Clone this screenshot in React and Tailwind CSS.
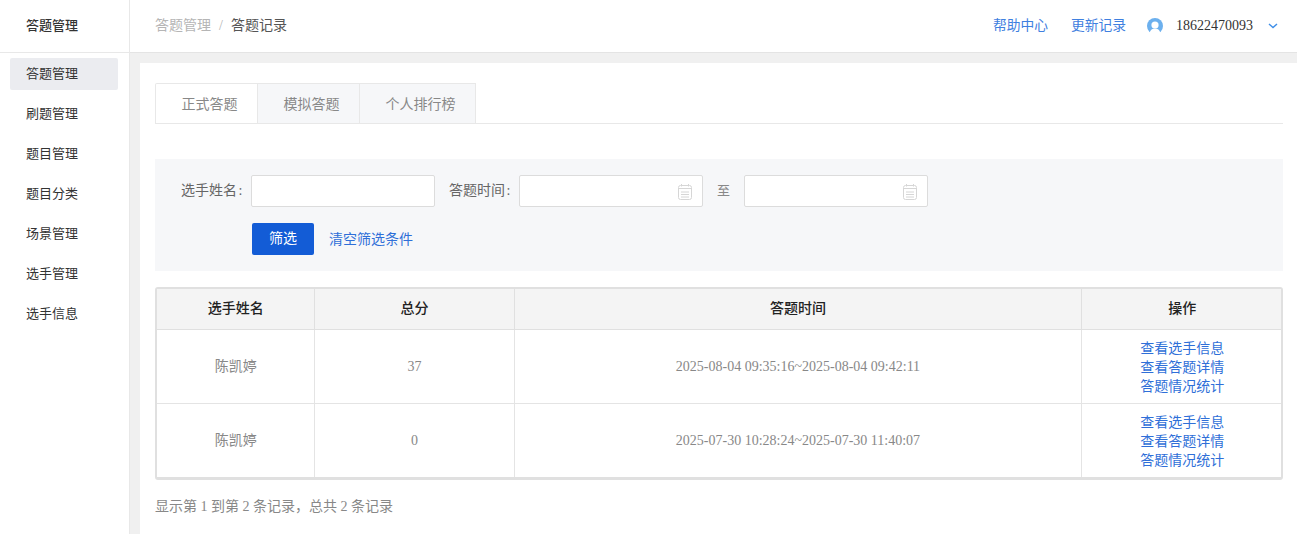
import React from "react";

const menu = ["答题管理", "刷题管理", "题目管理", "题目分类", "场景管理", "选手管理", "选手信息"];
const rows = [
  { name: "陈凯婷", score: "37", time: "2025-08-04 09:35:16~2025-08-04 09:42:11" },
  { name: "陈凯婷", score: "0", time: "2025-07-30 10:28:24~2025-07-30 11:40:07" },
];

const CalendarIcon = () => (
  <svg width="14" height="16" viewBox="0 0 14 16" fill="none" stroke="#d6d6d6" strokeWidth="1">
    <rect x="0.5" y="1.5" width="13" height="14" rx="2" />
    <path d="M0.500 4.500H13.500M3.500 0V2.500M10.500 0V2.500M3 8H11M3 10.500H11M3 13H11" />
  </svg>
);

const DateInput = () => (
  <div className="w-[184px] h-8 bg-white border border-[#dcdcdc] rounded-[2px] flex items-center justify-end pr-[10px] pt-[2px]">
    <CalendarIcon />
  </div>
);

const App = () => {
  return (
    <div className="flex h-[534px] w-[1297px] overflow-hidden bg-[#f0f0f0] font-['Liberation_Serif','Noto_Sans_CJK_SC',serif] text-sm">
      {/* Sidebar */}
      <div className="w-[130px] shrink-0 bg-white border-r border-[#e8e8e8]">
        <div className="h-[53px] border-b border-[#e8e8e8] pl-[26px] flex items-center text-[13px] font-medium text-[#333]">答题管理</div>
        <div className="pl-[10px] pr-[11px] pt-[5px] flex flex-col gap-2">
          {menu.map((m, i) => (
            <div key={m + i} className={`h-8 rounded-[2px] pl-4 flex items-center text-[13px] text-[#333] ${i === 0 ? "bg-[#ebecf0]" : ""}`}>{m}</div>
          ))}
        </div>
      </div>

      <div className="flex-1 min-w-0 flex flex-col">
        {/* Header */}
        <div className="h-[53px] shrink-0 bg-white border-b border-[#e4e4e4] flex items-center pl-[25px] pr-[19px]">
          <span className="text-[#b5b5b5]">答题管理</span>
          <span className="text-[#b5b5b5] mx-2">/</span>
          <span className="text-[#555]">答题记录</span>
          <span className="ml-auto text-[13.75px] text-[#3f80e0]">帮助中心</span>
          <span className="ml-[23px] text-[13.75px] text-[#3f80e0]">更新记录</span>
          <svg className="ml-[21px]" width="16" height="16" viewBox="0 0 16 16">
            <circle cx="8" cy="8" r="8" fill="#6cb0ee" />
            <circle cx="8" cy="7" r="3.6" fill="#fff" />
            <path d="M2.6 15c.6-3 2.8-4.4 5.4-4.4s4.800 1.400 5.400 4.400a8 8 0 0 1-10.800 0z" fill="#fff" />
          </svg>
          <span className="ml-[13px] text-[#333]">18622470093</span>
          <svg className="ml-[15px]" width="10" height="6" viewBox="0 0 10 6" fill="none" stroke="#3f8fe8" strokeWidth="1.500">
            <path d="M1 1l4 3.500L9 1" />
          </svg>
        </div>

        {/* Content */}
        <div className="flex-1 mt-[10px] ml-[10px] bg-white pl-[15px] pr-[14px] pt-5">
          {/* Tabs */}
          <div className="flex h-[41px] border-b border-[#e8e8e8]">
            <div className="w-[103px] h-10 bg-white border-t border-l border-r border-[#e8e8e8] rounded-tl-[2px] flex items-center justify-center pl-[6px] pt-[2px] text-[#888]">正式答题</div>
            <div className="w-[102px] h-10 bg-[#f6f7f9] border-t border-r border-[#e8e8e8] flex items-center justify-center pl-[6px] pt-[2px] text-[#888]">模拟答题</div>
            <div className="w-[116px] h-10 bg-[#f6f7f9] border-t border-r border-[#e8e8e8] flex items-center justify-center pl-[6px] pt-[2px] text-[#888]">个人排行榜</div>
          </div>

          {/* Filter */}
          <div className="mt-[35px] h-[112px] bg-[#f6f7f9] pl-[26px] pt-4">
            <div className="flex items-center h-8">
              <span className="text-[#666] w-[70px]">选手姓名<span className="ml-[1.5px]">:</span></span>
              <div className="w-[184px] h-8 bg-white border border-[#dcdcdc] rounded-[2px]" />
              <span className="text-[#666] ml-[14px] w-[70px]">答题时间<span className="ml-[1.5px]">:</span></span>
              <DateInput />
              <span className="text-[#888] text-[13px] w-[41px] text-center">至</span>
              <DateInput />
            </div>
            <div className="flex items-center mt-4 pl-[71px]">
              <div className="w-[62px] h-8 bg-[#135cd6] rounded-[2px] text-white flex items-center justify-center">筛选</div>
              <span className="ml-[15px] pt-[1px] text-[#2f6fd8]">清空筛选条件</span>
            </div>
          </div>

          {/* Table */}
          <div className="mt-4 border-2 border-[#e0e0e0] border-b-[3px] rounded-[3px] overflow-hidden">
            <table className="w-full table-fixed border-collapse">
              <thead>
                <tr className="h-[40px] bg-[#f4f4f4] text-[#222] font-medium border-b border-[#e0e0e0]">
                  <th className="w-[157px] font-medium pl-[1px] border-r border-[#e0e0e0]">选手姓名</th>
                  <th className="w-[200px] font-medium pl-[1px] border-r border-[#e0e0e0]">总分</th>
                  <th className="w-[567px] font-medium pl-[1px] border-r border-[#e0e0e0]">答题时间</th>
                  <th className="font-medium pl-[2px]">操作</th>
                </tr>
              </thead>
              <tbody>
                {rows.map((r, i) => (
                  <tr key={i} className={`h-[74px] text-center text-[#888] ${i === 0 ? "border-b border-[#e4e4e4]" : ""}`}>
                    <td className="pt-[2px] pl-[1px] border-r border-[#e4e4e4]">{r.name}</td>
                    <td className="pt-[2px] pl-[1px] border-r border-[#e4e4e4]">{r.score}</td>
                    <td className="pt-[2px] pl-[1px] border-r border-[#e4e4e4]">{r.time}</td>
                    <td className="pt-[2px] pl-[2px] text-[#2f6fd8] leading-[19px]">
                      <div>查看选手信息</div>
                      <div>查看答题详情</div>
                      <div>答题情况统计</div>
                    </td>
                  </tr>
                ))}
              </tbody>
            </table>
          </div>

          <div className="mt-[17px] text-[#888]">显示第 1 到第 2 条记录，总共 2 条记录</div>
        </div>
      </div>
    </div>
  );
};

export default App;
